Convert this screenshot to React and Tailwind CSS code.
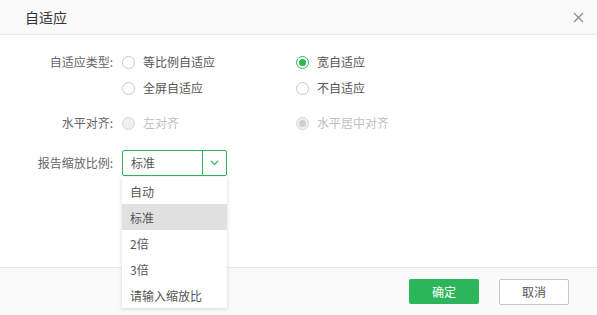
import React from "react";

const font = { fontFamily: '"Noto Sans CJK SC", "Noto Sans", sans-serif' };

function Radio({ checked, disabled, label }) {
  let circle = "border-[#c8c8c8] bg-white";
  if (checked && !disabled) circle = "border-[#2bb65c] bg-white";
  if (disabled) circle = "border-[#d6d6d6] bg-[#f0f0f0]";
  return (
    <div className="flex items-center gap-[8px]">
      <span className={`w-[13px] h-[13px] rounded-full border flex items-center justify-center ${circle}`}>
        {checked && (
          <span className={`w-[7px] h-[7px] rounded-full ${disabled ? "bg-[#cfcfcf]" : "bg-[#2bb65c]"}`} />
        )}
      </span>
      <span className={`text-[12px] ${disabled ? "text-[#c0c0c0]" : "text-[#555]"}`}>{label}</span>
    </div>
  );
}

export default function App() {
  const items = ["自动", "标准", "2倍", "3倍", "请输入缩放比"];
  return (
    <div className="w-[597px] h-[315px] bg-white flex flex-col relative overflow-hidden" style={font}>
      <div className="h-[35px] bg-[#fafafa] border-b border-[#e9e9e9] flex items-center justify-between pl-[25px] pr-[12px] shrink-0">
        <span className="text-[14px] text-[#333]">自适应</span>
        <svg width="11" height="11" viewBox="0 0 11 11" className="mr-[1px]">
          <path d="M1 1 L10 10 M10 1 L1 10" stroke="#8c8c8c" strokeWidth="1.2" />
        </svg>
      </div>
      <div className="flex-1 pt-[14px]">
        <div className="flex">
          <div className="w-[113px] h-[26px] flex items-center justify-end text-[12px] text-[#666]">自适应类型:</div>
          <div className="pl-[9px] grid grid-cols-[174px_auto]">
            <div className="h-[26px] flex items-center"><Radio label="等比例自适应" /></div>
            <div className="h-[26px] flex items-center"><Radio checked label="宽自适应" /></div>
            <div className="h-[26px] flex items-center"><Radio label="全屏自适应" /></div>
            <div className="h-[26px] flex items-center"><Radio label="不自适应" /></div>
          </div>
        </div>
        <div className="flex mt-[9px]">
          <div className="w-[113px] h-[26px] flex items-center justify-end text-[12px] text-[#666]">水平对齐:</div>
          <div className="pl-[9px] grid grid-cols-[174px_auto]">
            <div className="h-[26px] flex items-center"><Radio disabled label="左对齐" /></div>
            <div className="h-[26px] flex items-center"><Radio disabled checked label="水平居中对齐" /></div>
          </div>
        </div>
        <div className="flex mt-[14px] items-center">
          <div className="w-[113px] h-[26px] flex items-center justify-end text-[12px] text-[#666]">报告缩放比例:</div>
          <div className="ml-[9px] relative">
            <div className="w-[105px] h-[26px] border border-[#2bb65c] rounded-[2px] flex">
              <div className="flex-1 flex items-center pl-[8px] text-[12px] text-[#555]">标准</div>
              <div className="w-[24px] border-l border-[#2bb65c] flex items-center justify-center">
                <svg width="9" height="6" viewBox="0 0 9 6">
                  <path d="M1 1 L4.5 4.5 L8 1" fill="none" stroke="#2bb65c" strokeWidth="1.2" />
                </svg>
              </div>
            </div>
            <div className="absolute left-0 top-[27px] w-[105px] bg-white shadow-[0_1px_4px_rgba(0,0,0,0.15)] pt-[1px] z-10">
              {items.map((it, i) => (
                <div
                  key={it}
                  className={`h-[26px] flex items-center pl-[8px] pt-[1px] text-[12px] text-[#555] ${i === 1 ? "bg-[#e1e1e1]" : ""}`}
                >
                  {it}
                </div>
              ))}
            </div>
          </div>
        </div>
      </div>
      <div className="h-[48px] bg-[#fafafa] border-t border-[#e9e9e9] flex items-center justify-end gap-[20px] pr-[28px] shrink-0">
        <button className="w-[70px] h-[25px] bg-[#2bb65c] rounded-[2px] text-white text-[12px]">确定</button>
        <button className="w-[70px] h-[26px] bg-white border border-[#c8c8c8] rounded-[2px] text-[#555] text-[12px]">取消</button>
      </div>
    </div>
  );
}
